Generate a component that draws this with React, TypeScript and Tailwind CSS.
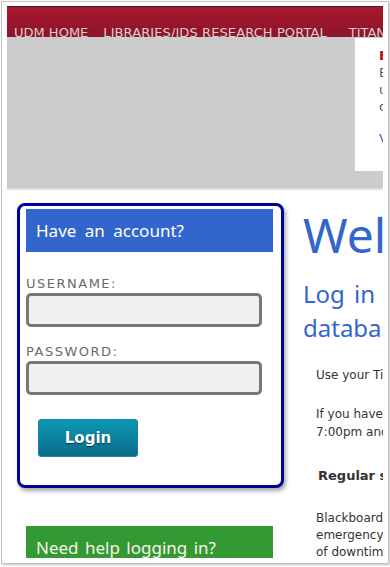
import React from "react";

const dv = { fontFamily: '"DejaVu Sans", Verdana, sans-serif' } as React.CSSProperties;
const ns = { fontFamily: '"Noto Sans", "Open Sans", sans-serif' } as React.CSSProperties;

export default function App() {
  return (
    <div className="w-[390px] h-[567px] bg-white overflow-hidden">
      <div className="ml-[1px] mt-[1px] w-[388px] h-[563px] border border-[#c4c4c4] bg-white pl-[5px] pr-[5px] pt-[4px] pb-[5px] shadow-[1px_1px_2px_rgba(0,0,0,0.25)]">
        <div className="w-[376px] h-[552px] overflow-hidden">
          {/* nav */}
          <div
            className="h-[31px] border-t border-[#4a1630] bg-gradient-to-b from-[#a8182f] to-[#8c1529] flex pl-[7px] pt-[18px] whitespace-nowrap text-[13px] leading-[15px] text-[#dccdd0]"
            style={dv}
          >
            <span>UDM HOME</span>
            <span className="ml-[15px] tracking-[0.1px]">LIBRARIES/IDS RESEARCH PORTAL</span>
            <span className="ml-[22px]">TITAN CONNECT</span>
          </div>
          {/* banner */}
          <div className="h-[153px] bg-[#cccccc] border-b-2 border-[#dedede] flex overflow-hidden">
            <div className="w-[348px] flex-none" />
            <div
              className="flex-none w-[200px] h-[133px] mt-[1px] bg-white pl-[24px] pt-[9px] text-[13px] leading-[17px] text-[#555] whitespace-nowrap"
              style={dv}
            >
              <div className="font-bold text-[#b01020]">Emergency Maintenance</div>
              <div>Blackboard will be</div>
              <div>unavailable during</div>
              <div>our scheduled window</div>
              <div className="h-[15px]" />
              <div className="text-[#3a56a8]">View the schedule</div>
            </div>
          </div>
          {/* main */}
          <div className="flex">
            <div className="flex-none ml-[10px] w-[267px]">
              <div className="mt-[13px] h-[285px] border-[3px] border-[#00009c] rounded-[8px] bg-white shadow-[2px_3px_4px_rgba(0,0,0,0.35)]">
                <div
                  className="mt-[3px] ml-[6px] w-[247px] h-[43px] bg-[#3366cc] flex items-center pl-[10px] text-white text-[17px] leading-[23px] [word-spacing:4px]"
                  style={ns}
                >
                  Have an account?
                </div>
                <div
                  className="ml-[6px] mt-[24px] text-[13px] leading-[15px] tracking-[1.5px] text-[#6a6a6a]"
                  style={dv}
                >
                  USERNAME:
                </div>
                <div className="ml-[6px] mt-[2px] w-[236px] h-[34px] border-[3px] border-[#777] rounded-[5px] bg-[#efefef]" />
                <div
                  className="ml-[6px] mt-[17px] text-[13px] leading-[15px] tracking-[1.5px] text-[#6a6a6a]"
                  style={dv}
                >
                  PASSWORD:
                </div>
                <div className="ml-[6px] mt-[2px] w-[236px] h-[34px] border-[3px] border-[#777] rounded-[5px] bg-[#efefef]" />
                <div
                  className="ml-[18px] mt-[24px] w-[100px] h-[38px] rounded-[3px] border border-[#1a7fb0] bg-gradient-to-b from-[#0a98b4] to-[#0a6c88] flex items-center justify-center text-white font-bold text-[15px] [text-shadow:0_1px_1px_rgba(0,0,0,0.6)]"
                  style={dv}
                >
                  Login
                </div>
              </div>
              <div
                className="mt-[38px] ml-[9px] w-[247px] h-[43px] bg-[#339933] flex items-center pl-[10px] text-[#f6f6e6] text-[17px] leading-[23px] [word-spacing:2px]"
                style={ns}
              >
                Need help logging in?
              </div>
            </div>
            <div className="flex-none ml-[19px] w-[300px] whitespace-nowrap">
              <div className="mt-[20px] text-[48px] leading-[50px] text-[#3366cc]" style={ns}>
                Welcome
              </div>
              <div className="mt-[17px] text-[24px] leading-[34px] text-[#3366cc] [word-spacing:3px]" style={ns}>
                <div>Log in to access library</div>
                <div>databases and resources</div>
              </div>
              <div className="mt-[21px] pl-[13px] text-[12px] leading-[18px] text-[#333]" style={dv}>
                Use your Titan username and password.
              </div>
              <div className="mt-[21px] pl-[13px] text-[12px] leading-[18px] text-[#333]" style={dv}>
                <div>If you have trouble logging in after</div>
                <div>7:00pm and on weekends, call us.</div>
              </div>
              <div className="mt-[26px] pl-[15px] text-[13px] leading-[18px] font-bold text-[#333]" style={dv}>
                Regular scheduled maintenance
              </div>
              <div className="mt-[25px] pl-[13px] text-[12px] leading-[17px] text-[#333]" style={dv}>
                <div>Blackboard may be unavailable for</div>
                <div>emergency maintenance. Notice</div>
                <div>of downtime will be posted here.</div>
              </div>
            </div>
          </div>
        </div>
      </div>
    </div>
  );
}
